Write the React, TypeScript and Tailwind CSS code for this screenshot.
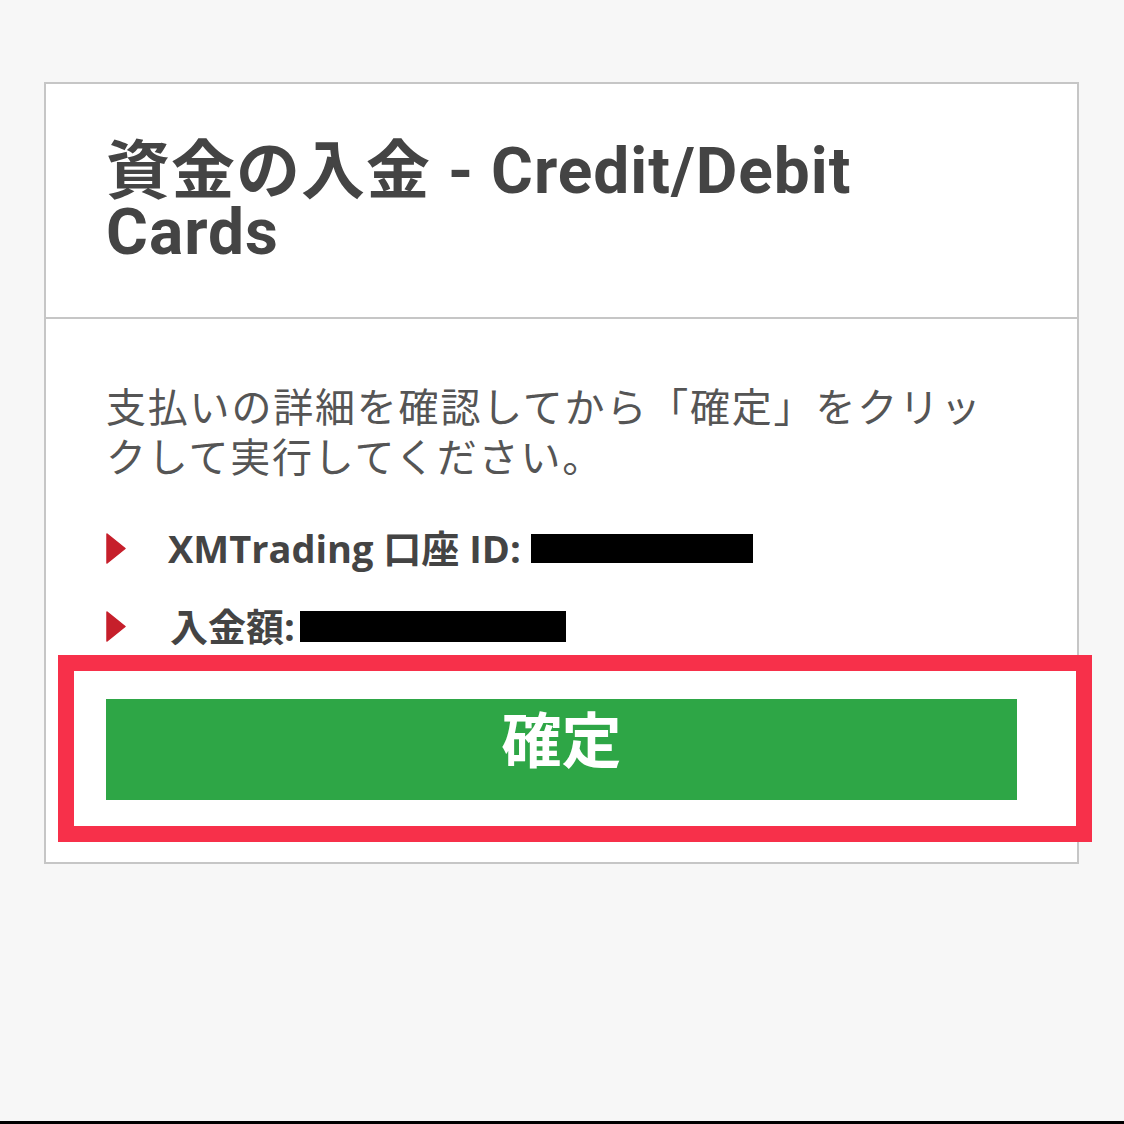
import React from "react";

const Tri = () => (
  <svg width="20" height="31" viewBox="0 0 20 31" className="shrink-0">
    <path d="M1 1 L19 15.5 L1 30 Z" fill="#c61f2b" stroke="#c61f2b" strokeWidth="1.5" strokeLinejoin="round" />
  </svg>
);

export default function App() {
  return (
    <div
      className="relative flex min-h-[1124px] flex-col bg-[#f7f7f7]"
      style={{ fontFamily: '"Noto Sans CJK JP", "Noto Sans", sans-serif' }}
    >
      <div className="ml-[44px] mt-[82px] w-[1035px] border-2 border-[#c6c6c6] bg-white">
        <div className="border-b-2 border-[#c6c6c6] px-[60px] pb-[54px] pt-[57px]">
          <h1
            className="text-[64px] font-bold leading-[61px] tracking-[1px] text-[#444444]"
            style={{ fontFamily: 'Roboto, "Noto Sans CJK JP", sans-serif' }}
          >
            資金の入金 - Credit/Debit
            <br />
            Cards
          </h1>
        </div>
        <div className="px-[60px] pb-[62px] pt-[61px]">
          <p className="text-[40px] leading-[50px] tracking-[1.8px] text-[#555555] [text-spacing-trim:space-all]">
            支払いの詳細を確認してから「確定」をクリッ
            <br />
            クして実行してください。
          </p>
          <ul className="mt-[48px] flex flex-col gap-[38px]">
            <li className="flex h-[40px] items-center">
              <Tri />
              <span
                className="ml-[42px] flex items-center text-[38px] font-bold text-[#444444]"
                style={{ fontFamily: '"Open Sans", "Noto Sans CJK JP", sans-serif' }}
              >
                XMTrading 口座 ID:
                <span className="ml-[10px] inline-block h-[29px] w-[222px] bg-black" />
              </span>
            </li>
            <li className="flex h-[40px] items-center">
              <Tri />
              <span
                className="ml-[44px] flex items-center text-[38px] font-bold text-[#444444]"
                style={{ fontFamily: '"Open Sans", "Noto Sans CJK JP", sans-serif' }}
              >
                入金額:
                <span className="ml-[5px] inline-block h-[31px] w-[266px] bg-black" />
              </span>
            </li>
          </ul>
          <button className="mt-[53px] flex h-[101px] w-full items-center justify-center bg-[#2ea646] pb-[26px] text-[60px] font-bold text-white">
            確定
          </button>
        </div>
      </div>
      <div className="absolute left-[58px] top-[655px] h-[187px] w-[1034px] border-[16px] border-[#f7304a]" />
      <div className="flex-1" />
      <div className="h-[3px] bg-black" />
    </div>
  );
}
